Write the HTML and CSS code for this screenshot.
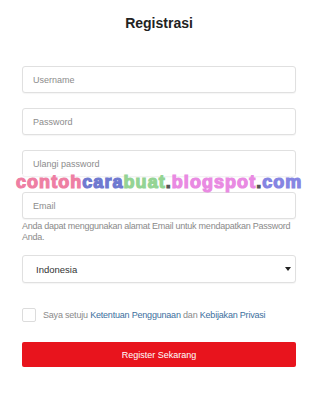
FILE: index.html
```html
<!DOCTYPE html>
<html>
<head>
    <title>Registrasi</title>
    <link rel="stylesheet" href="styles.css">
</head>
<body>
    <div class="register">
        <h1 class="title">Registrasi</h1>

        <form class="register-form" onsubmit="return false">
            <input type="text" class="field" placeholder="Username">
            <input type="password" class="field" placeholder="Password">
            <input type="password" class="field" placeholder="Ulangi password">
            <input type="email" class="field field-email" placeholder="Email">
            <p class="help">Anda dapat menggunakan alamat Email untuk mendapatkan Password Anda.</p>

            <div class="select-wrap">
                <select class="country">
                    <option>Indonesia</option>
                    <option>Malaysia</option>
                    <option>Singapura</option>
                </select>
                <svg class="select-arrow" width="6" height="4" viewBox="0 0 6 4"><path d="M0 0h6L3 4z" fill="#222"/></svg>
            </div>

            <label class="agree">
                <input type="checkbox" class="check">
                <span>Saya setuju <a href="#">Ketentuan Penggunaan</a> dan <a href="#">Kebijakan Privasi</a></span>
            </label>

            <button type="submit" class="submit-btn">Register Sekarang</button>
        </form>

        <!-- watermark over the form -->
        <div class="watermark"><span class="wm-pink">contoh</span><span class="wm-blue">cara</span><span class="wm-green">buat</span><span class="wm-dot">.</span><span class="wm-orchid">blogspot</span><span class="wm-dot">.</span><span class="wm-violet">com</span></div>
    </div>
</body>
</html>
```

FILE: styles.css
```css
body {
    margin: 0;
    background: #fff;
    color: #333;
    font-family: "Liberation Sans", Arial, sans-serif;
}
.register {
    position: relative;
    padding: 13px 24px 0 22px;
}
.title {
    margin: 0;
    font-size: 14px;
    line-height: 20px;
    font-weight: bold;
    text-align: center;
    color: #222;
}
.register-form {
    display: flex;
    flex-direction: column;
    margin-top: 33px;
}
.field {
    box-sizing: border-box;
    height: 27px;
    margin: 0 0 15px;
    padding: 0 10px;
    border: 1px solid #e0e0e0;
    border-radius: 3px;
    box-shadow: 0 1px 1px rgba(0, 0, 0, 0.04);
    font-family: inherit;
    font-size: 9px;
    color: #333;
    outline: none;
}
.field::placeholder {
    color: #8c8c8c;
}
.field-email {
    margin-bottom: 2px;
}
.help {
    margin: 0;
    font-size: 9px;
    line-height: 10.5px;
    letter-spacing: -0.25px;
    color: #8a8a8a;
}
.select-wrap {
    position: relative;
    margin-top: 13px;
}
.country {
    box-sizing: border-box;
    width: 100%;
    height: 28px;
    padding: 0 13px;
    border: 1px solid #e0e0e0;
    border-radius: 3px;
    box-shadow: 0 1px 1px rgba(0, 0, 0, 0.04);
    background: #fff;
    font-family: inherit;
    font-size: 9.5px;
    color: #333;
    appearance: none;
    -webkit-appearance: none;
    outline: none;
}
.select-arrow {
    position: absolute;
    right: 5px;
    top: 12px;
    pointer-events: none;
}
.agree {
    display: flex;
    align-items: center;
    gap: 7px;
    margin-top: 25px;
    font-size: 9px;
    letter-spacing: -0.2px;
    color: #8a8a8a;
}
.agree a {
    color: #3d6f9e;
    text-decoration: none;
}
.check {
    appearance: none;
    -webkit-appearance: none;
    width: 14px;
    height: 14px;
    margin: 0;
    border: 1px solid #dcdcdc;
    border-radius: 2px;
    background: #fff;
    flex-shrink: 0;
}
.submit-btn {
    height: 25px;
    margin-top: 20px;
    border: none;
    border-radius: 2px;
    background: #e8141d;
    color: #fff;
    font-family: inherit;
    font-size: 9px;
    cursor: pointer;
}
.watermark {
    position: absolute;
    left: 15px;
    top: 174px;
    padding: 0 1px;
    background: rgba(255, 255, 255, 0.6);
    font-family: "Liberation Sans", Arial, sans-serif;
    font-weight: bold;
    font-size: 18px;
    line-height: 17px;
    letter-spacing: 1.05px;
    white-space: nowrap;
}
.watermark span {
    -webkit-text-stroke: 1.2px;
}
.wm-pink { color: #ee7fa3; -webkit-text-stroke-color: #ee7fa3; }
.wm-blue { color: #6f79d0; -webkit-text-stroke-color: #6f79d0; }
.wm-green { color: #94d494; -webkit-text-stroke-color: #94d494; }
.wm-dot { color: #555; -webkit-text-stroke-color: #555; }
.wm-orchid { color: #e98ae2; -webkit-text-stroke-color: #e98ae2; }
.wm-violet { color: #8585e2; -webkit-text-stroke-color: #8585e2; }
```
